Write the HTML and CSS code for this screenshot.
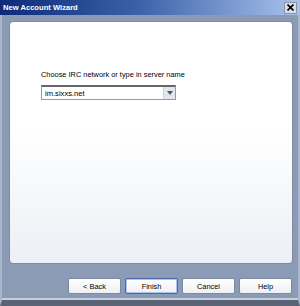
FILE: index.html
```html
<!DOCTYPE html>
<html lang="en">
<head>
    <meta charset="UTF-8">
    <title>New Account Wizard</title>
    <link rel="stylesheet" href="styles.css">
</head>
<body>
    <div class="window">
        <div class="titlebar">
            <span class="title">New Account Wizard</span>
            <span class="close">
                <svg width="7" height="7" viewBox="0 0 7 7"><path d="M0.5 0.5L6.5 6.5M6.5 0.5L0.5 6.5" stroke="#000" stroke-width="1.6"/></svg>
            </span>
        </div>
        <div class="content">
            <div class="panel">
                <label class="prompt" for="server">Choose IRC network or type in server name</label>
                <div class="combo">
                    <input type="text" id="server" value="im.sixxs.net">
                    <span class="arrow">
                        <svg width="6" height="4" viewBox="0 0 6 4"><path d="M0 0H6L3 4Z" fill="#4a5670"/></svg>
                    </span>
                </div>
            </div>
            <div class="buttons">
                <button>&lt; Back</button>
                <button class="default">Finish</button>
                <button>Cancel</button>
                <button>Help</button>
            </div>
        </div>
    </div>
</body>
</html>
```

FILE: styles.css
```css
body {
    margin: 0;
    background: #8c9cb6;
    font-family: "Liberation Sans", Arial, sans-serif;
    font-size: 7.4px;
}
.window {
    width: 300px;
    height: 306px;
    box-sizing: border-box;
    background: #8b9bb5;
    border-left: 2px solid #aab6ca;
    border-right: 2px solid #aab6ca;
    border-bottom: 6px solid #5a6476;
    display: flex;
    flex-direction: column;
}
.titlebar {
    height: 15px;
    margin: 0 -2px;
    background: linear-gradient(to right, #0c2a78 0%, #3a5fa8 45%, #a9c3ec 100%);
    display: flex;
    align-items: center;
    justify-content: space-between;
    padding: 0 3px 0 3px;
}
.title {
    color: #fff;
    font-weight: bold;
    font-size: 7.6px;
}
.close {
    width: 11px;
    height: 10px;
    background: #d9dee8;
    border: 1px solid #8a94a8;
    display: flex;
    align-items: center;
    justify-content: center;
}
.content {
    flex: 1;
    display: flex;
    flex-direction: column;
    padding: 6px 5px 0 7px;
    border-bottom: 2px solid #c6cedb;
}
.panel {
    height: 243px;
    background: linear-gradient(to bottom, #ffffff 0%, #ffffff 45%, #eceff5 100%);
    border: 1px solid #7f8ba0;
    border-radius: 4px;
    box-sizing: border-box;
    padding: 48px 0 0 31px;
}
.prompt {
    display: block;
    color: #000;
    line-height: 9px;
    margin-bottom: 6px;
}
.combo {
    width: 135px;
    height: 15px;
    display: flex;
    border: 1px solid #9a9a9a;
    border-top: 2px solid #666;
    box-sizing: border-box;
    background: #fff;
}
.combo input {
    flex: 1;
    width: 0;
    border: none;
    padding: 0 3px;
    font-family: inherit;
    font-size: 7.6px;
    outline: none;
    height: 12px;
}
.arrow {
    width: 11px;
    background: #e2e6ee;
    border-left: 1px solid #cdd2da;
    display: flex;
    align-items: center;
    justify-content: center;
}
.buttons {
    display: flex;
    justify-content: flex-end;
    gap: 4px;
    padding: 14px 1px 0 0;
}
.buttons button {
    width: 53px;
    height: 16px;
    padding: 0;
    font-family: inherit;
    font-size: 7.4px;
    color: #000;
    background: linear-gradient(to bottom, #ffffff, #eef0f4);
    border: 1px solid #7e899d;
    border-radius: 2px;
}
.buttons .default {
    border-color: #4a68a4;
    box-shadow: inset 0 0 0 1px #a8c8ee;
}
```
